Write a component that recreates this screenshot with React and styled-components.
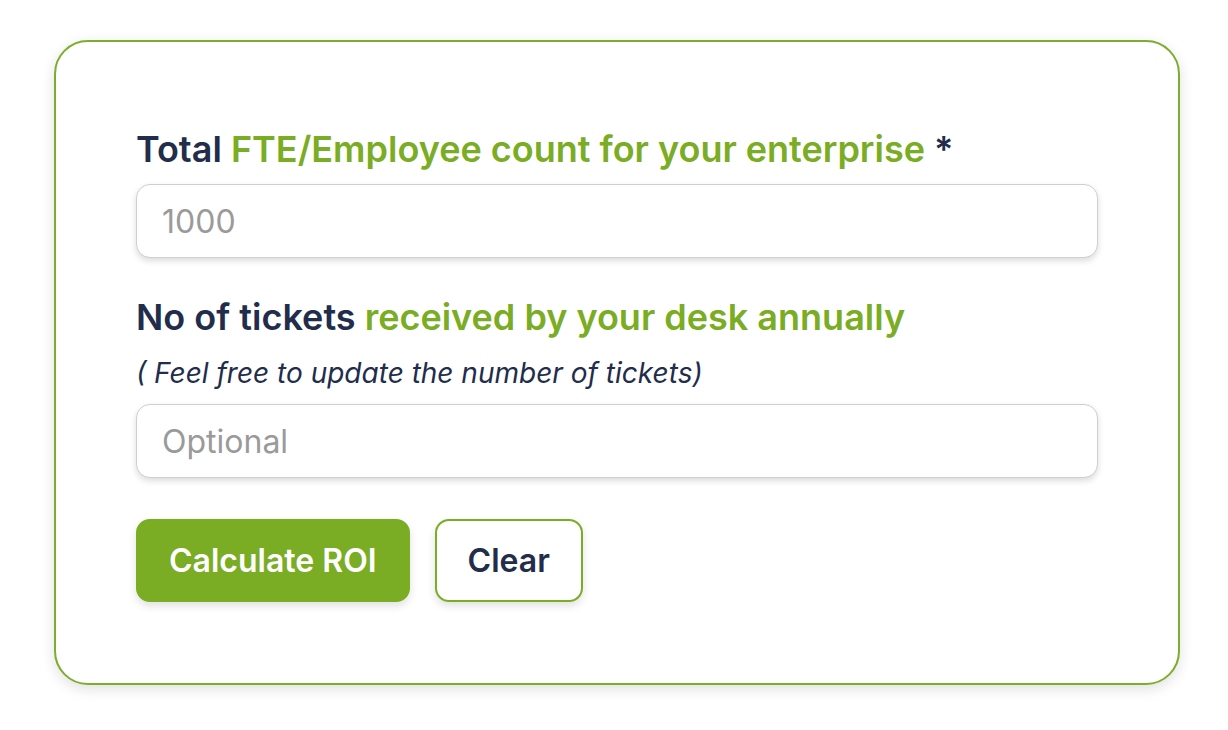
import React from "react";
import styled, { createGlobalStyle } from "styled-components";

const GlobalStyle = createGlobalStyle`
  body {
    margin: 0;
    background: #ffffff;
    font-family: Inter, "Noto Sans", sans-serif;
  }
`;

const Page = styled.div`
  padding: 40px 48px 40px 54px;
`;

const Card = styled.form`
  width: 1126px;
  box-sizing: border-box;
  border: 2px solid #7dad2b;
  border-radius: 34px;
  background: #fff;
  box-shadow: 0 4px 14px rgba(0, 0, 0, 0.12);
  padding: 85px 80px 81px 80px;
  display: flex;
  flex-direction: column;
`;

const Label = styled.label`
  font-size: 36px;
  line-height: 44px;
  font-weight: 600;
  color: #222d4b;
`;

const Accent = styled.span`
  color: #7aac24;
`;

const Hint = styled.div`
  font-size: 28px;
  line-height: 34px;
  font-style: italic;
  color: #222d4b;
  margin-top: 17px;
`;

const Input = styled.input`
  box-sizing: border-box;
  width: 100%;
  height: 74px;
  margin-top: ${(p) => p.$gap}px;
  border: 1px solid #cfcfcf;
  border-radius: 14px;
  box-shadow: 0 3px 6px rgba(0, 0, 0, 0.14);
  padding: 0 25px;
  font-family: Inter, "Noto Sans", sans-serif;
  font-size: 32px;
  color: #333;
  outline: none;
  &::placeholder {
    color: #9a9a9a;
  }
`;

const Field = styled.div`
  display: flex;
  flex-direction: column;
  & + & {
    margin-top: 37px;
  }
`;

const Actions = styled.div`
  display: flex;
  gap: 25px;
  margin-top: 41px;
`;

const Button = styled.button`
  box-sizing: border-box;
  height: 83px;
  padding: 0 31px;
  border-radius: 14px;
  font-family: Inter, "Noto Sans", sans-serif;
  font-size: 32px;
  font-weight: 600;
  cursor: pointer;
  border: 2px solid #7aac24;
  background: ${(p) => (p.$primary ? "#7aac24" : "#fff")};
  color: ${(p) => (p.$primary ? "#fff" : "#222d4b")};
  box-shadow: 0 4px 8px rgba(0, 0, 0, 0.12);
`;

export default function App() {
  return (
    <>
      <GlobalStyle />
      <Page>
        <Card onSubmit={(e) => e.preventDefault()}>
          <Field>
            <Label>
              Total <Accent>FTE/Employee count for your enterprise</Accent> *
            </Label>
            <Input $gap={13} placeholder="1000" />
          </Field>
          <Field>
            <Label>
              No of tickets <Accent>received by your desk annually</Accent>
            </Label>
            <Hint>( Feel free to update the number of tickets)</Hint>
            <Input $gap={14} placeholder="Optional" />
          </Field>
          <Actions>
            <Button $primary type="submit">Calculate ROI</Button>
            <Button type="button">Clear</Button>
          </Actions>
        </Card>
      </Page>
    </>
  );
}
